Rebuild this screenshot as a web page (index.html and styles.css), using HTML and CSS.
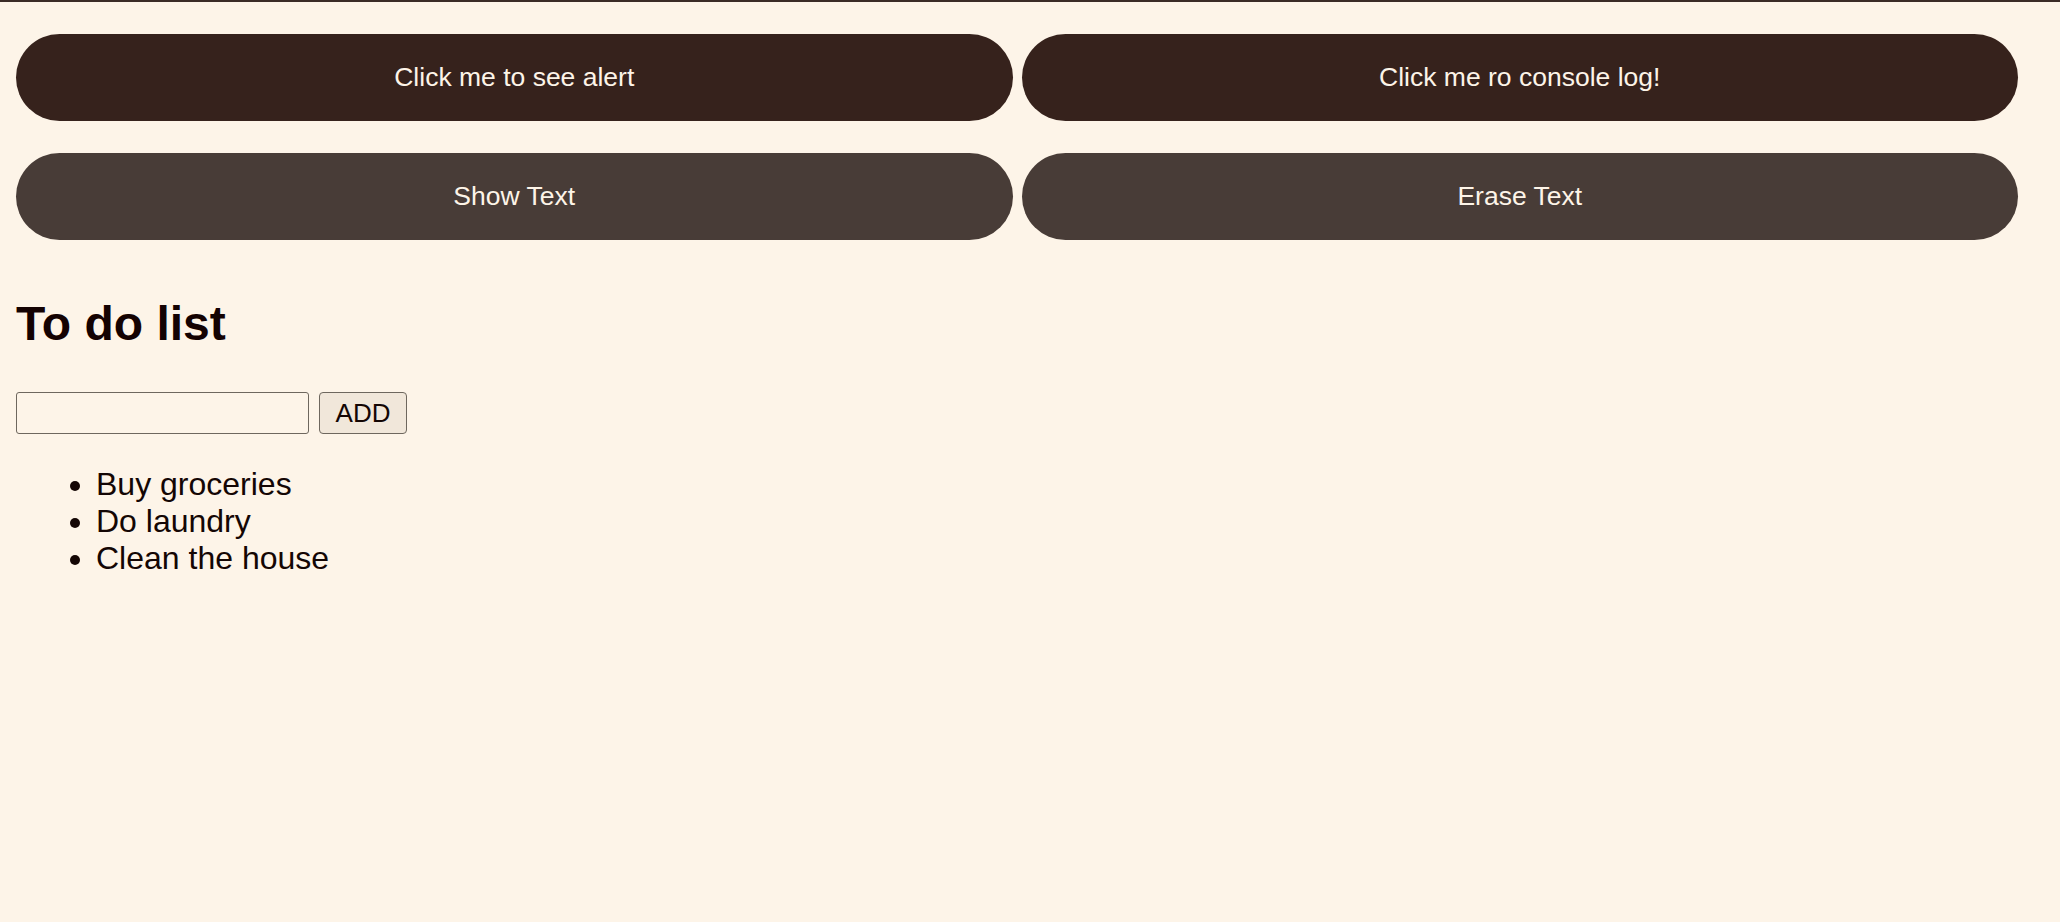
FILE: index.html
```html
<!DOCTYPE html>
<html lang="en">
<head>
<meta charset="utf-8">
<title>To do list</title>
<link rel="stylesheet" href="styles.css">
</head>
<body>
<div class="topbar"></div>
<main class="page">
  <div class="btn-grid">
    <button class="btn btn-dark">Click me to see alert</button>
    <button class="btn btn-dark">Click me ro console log!</button>
    <button class="btn btn-mid">Show Text</button>
    <button class="btn btn-mid">Erase Text</button>
  </div>
  <h1 class="title">To do list</h1>
  <div class="add-row">
    <input class="todo-input" type="text">
    <button class="add-btn">ADD</button>
  </div>
  <ul class="todo-list">
    <li>Buy groceries</li>
    <li>Do laundry</li>
    <li>Clean the house</li>
  </ul>
</main>
</body>
</html>
```

FILE: styles.css
```css
html, body {
  margin: 0;
  padding: 0;
}
body {
  background: #fdf4e8;
  font-family: "Liberation Sans", Arial, Helvetica, sans-serif;
  color: #140604;
  min-height: 100vh;
}
.topbar {
  height: 2px;
  background: #3a2b26;
}
.page {
  padding: 32px 42px 0 16px;
}
.btn-grid {
  display: grid;
  grid-template-columns: 1fr 1fr;
  column-gap: 9px;
  row-gap: 32px;
}
.btn {
  height: 87px;
  border: none;
  border-radius: 44px;
  color: #fdf4e8;
  font-family: "Liberation Sans", Arial, Helvetica, sans-serif;
  font-size: 26.5px;
  padding: 0;
  cursor: pointer;
}
.btn-dark {
  background: #36221c;
}
.btn-mid {
  background: #483c37;
}
.title {
  margin: 57px 0 0 0;
  font-size: 48px;
  line-height: 54px;
  font-weight: bold;
  color: #140202;
}
.add-row {
  display: flex;
  gap: 10px;
  margin-top: 41px;
  height: 42px;
}
.todo-input {
  width: 293px;
  height: 42px;
  box-sizing: border-box;
  margin: 0;
  border: 1.5px solid #6e675e;
  border-radius: 3px;
  background: #fdf4e8;
  font-size: 24px;
  font-family: "Liberation Sans", Arial, sans-serif;
}
.add-btn {
  width: 88px;
  height: 42px;
  box-sizing: border-box;
  margin: 0;
  padding: 0;
  border: 1.5px solid #6e675e;
  border-radius: 4px;
  background: #f1e7da;
  color: #140604;
  font-size: 26px;
  font-family: "Liberation Sans", Arial, sans-serif;
}
.todo-list {
  margin: 32px 0 0 0;
  padding-left: 80px;
  font-size: 32px;
  line-height: 37px;
}
```
